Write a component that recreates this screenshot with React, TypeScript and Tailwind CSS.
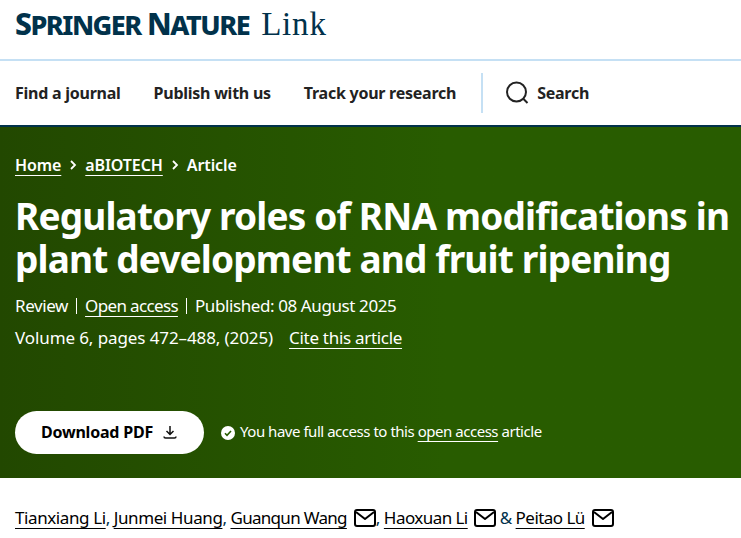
import React from "react";

const Mail = () => (
  <svg width="22" height="18" viewBox="0 0 22 18" fill="none" stroke="#000" strokeWidth="2" strokeLinejoin="round" className="shrink-0">
    <rect x="1" y="1" width="20" height="16" rx="2" />
    <path d="M2 3l9 7 9-7" />
  </svg>
);

const Chevron = () => (
  <svg width="8" height="10" viewBox="0 0 8 10" fill="none" stroke="#fff" strokeWidth="1.8" className="mx-[8px]"><path d="M2 1l4 4-4 4" /></svg>
);

const authorLink = "text-black underline underline-offset-[4px] decoration-1";

export default function App() {
  return (
    <div className="w-[741px] h-[538px] overflow-hidden bg-white text-[#222] font-['Noto_Sans',sans-serif]">
      <header className="h-[61px] border-b-2 border-[#c5e0f4] flex items-baseline pt-[8px] pl-[15px] text-[#01324b] leading-[32px]">
        <span className="text-[30px] font-extrabold tracking-[-1.5px]">
          S<span className="text-[27px]">PRINGER</span> N<span className="text-[27px]">ATURE</span>
        </span>
        <span className="ml-[12px] text-[33px] font-['Liberation_Serif',serif] tracking-[0.8px]">Link</span>
      </header>
      <nav className="h-[64px] flex items-center pl-[15px] text-[16px] font-bold tracking-[-0.25px]">
        <a className="mr-[33px]">Find a journal</a>
        <a className="mr-[33px]">Publish with us</a>
        <a className="mr-[25px]">Track your research</a>
        <div className="w-[2px] h-[40px] bg-[#c5e0f4] mr-[22px]" />
        <svg width="24" height="24" viewBox="0 0 24 24" fill="none" stroke="#222" strokeWidth="2" className="mr-[8px]">
          <circle cx="11.500" cy="11" r="9.500" />
          <path d="M18.500 18l4 4" />
        </svg>
        <a>Search</a>
      </nav>
      <section className="h-[353px] border-t-2 border-[#01324b] bg-gradient-to-r from-[#224800] via-[#285c00] via-60% to-[#285c00] text-white px-[15px]">
        <div className="pt-[26px] flex items-center text-[16px] font-semibold leading-[24px] tracking-[-0.1px]">
          <a className="underline underline-offset-[4px] decoration-1">Home</a>
          <Chevron />
          <a className="underline underline-offset-[4px] decoration-1">aBIOTECH</a>
          <Chevron />
          <span>Article</span>
        </div>
        <h1 className="mt-[17px] text-[37px] font-bold leading-[43px] tracking-[-0.85px] whitespace-nowrap">
          Regulatory roles of RNA modifications in
          <br />
          plant development and fruit ripening
        </h1>
        <div className="mt-[14px] flex items-center text-[17px] leading-[24px] tracking-[-0.4px]">
          <span>Review</span>
          <span className="w-px h-[16px] bg-white mx-[8px]" />
          <a className="underline underline-offset-[4px] decoration-1 tracking-[-0.65px]">Open access</a>
          <span className="w-px h-[16px] bg-white mx-[8px]" />
          <span>Published: 08 August 2025</span>
        </div>
        <div className="mt-[8px] flex items-center text-[17px] leading-[24px] tracking-[-0.1px]">
          <span>Volume 6, pages 472–488, (2025)</span>
          <a className="ml-[16px] underline underline-offset-[4px] decoration-1 tracking-[-0.3px]">Cite this article</a>
        </div>
        <div className="mt-[61px] flex items-center">
          <a className="w-[189px] h-[43px] pb-[2px] rounded-full bg-white text-black font-bold text-[16px] tracking-[-0.2px] flex items-center justify-center gap-[9px]">
            Download PDF
            <svg width="16" height="16" viewBox="0 0 16 16" fill="none" stroke="#111" strokeWidth="1.500">
              <path d="M8 2v8M4.500 7L8 10.500 11.500 7M2 12.500c0 1 .5 1.500 1.500 1.500h9c1 0 1.500-.5 1.500-1.500" />
            </svg>
          </a>
          <svg width="14" height="14" viewBox="0 0 14 14" className="ml-[17px] mr-[5px]">
            <circle cx="7" cy="7" r="7" fill="#fff" />
            <path d="M4 7.300l2 2 4-4.300" fill="none" stroke="#285c00" strokeWidth="1.600" />
          </svg>
          <span className="text-[15px] tracking-[-0.47px] pb-[2px]">
            You have full access to this <a className="underline underline-offset-[4px] decoration-1">open access</a> article
          </span>
        </div>
      </section>
      <div className="mt-[28px] pl-[15px] flex items-center text-[17px] text-[#01324b] leading-[24px] tracking-[-0.55px]">
        <a className={`tracking-[-0.4px] ${authorLink}`}>Tianxiang Li</a>,
        <a className={`ml-[4px] tracking-[-0.4px] ${authorLink}`}>Junmei Huang</a>,
        <a className={`ml-[4px] mr-[7px] tracking-[-0.7px] ${authorLink}`}>Guanqun Wang</a>
        <Mail />,
        <a className={`ml-[4px] mr-[6px] ${authorLink}`}>Haoxuan Li</a>
        <Mail />
        <span className="mx-[4px]">&amp;</span>
        <a className={`mr-[7px] ${authorLink}`}>Peitao Lü</a>
        <Mail />
      </div>
    </div>
  );
}
